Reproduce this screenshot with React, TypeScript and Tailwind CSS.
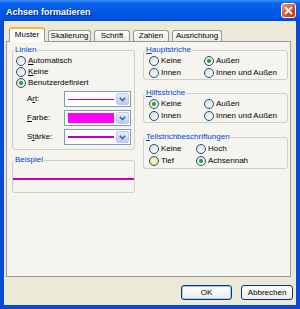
import React from 'react'

const FONT = { fontFamily: '"Liberation Sans", Arial, sans-serif' }

function Radio({ checked, hover }: { checked?: boolean; hover?: boolean }) {
  return (
    <span
      className={`w-[10px] h-[10px] rounded-full border flex items-center justify-center shrink-0 ${
        hover
          ? 'border-[#1C5180] bg-[radial-gradient(circle,#FDF3C4_30%,#F5C94F_100%)]'
          : 'border-[#1C5180] bg-[linear-gradient(135deg,#DCDBD5,#FFFFFF)]'
      }`}
    >
      {checked && <span className="w-[4px] h-[4px] rounded-full bg-[#21A121]" />}
    </span>
  )
}

function Option({ label, checked, hover, h = 'h-[12px]' }: { label: React.ReactNode; checked?: boolean; hover?: boolean; h?: string }) {
  return (
    <div className={`${h} flex items-center gap-[2px] whitespace-nowrap`}>
      <Radio checked={checked} hover={hover} />
      <span className="text-black">{label}</span>
    </div>
  )
}

function Group({ label, className, children }: { label: React.ReactNode; className: string; children?: React.ReactNode }) {
  return (
    <div className={`relative border border-[#D0D0BF] rounded-[3px] ${className}`}>
      <span className="absolute -top-[6px] left-[1px] px-[1px] bg-[#F5F4EF] text-[#0046D5] leading-[10px] whitespace-nowrap">
        {label}
      </span>
      {children}
    </div>
  )
}

function Combo({ children }: { children: React.ReactNode }) {
  return (
    <div className="w-[67px] h-[16px] border border-[#7F9DB9] bg-white flex items-center p-[1px]">
      <div className="flex-1 h-full flex items-center px-[2px]">{children}</div>
      <div className="w-[13px] h-full rounded-[2px] bg-[linear-gradient(to_bottom,#E6EEFF,#B9CCF7)] border border-[#B9CAF3] flex items-center justify-center">
        <svg width="7" height="5" viewBox="0 0 7 5">
          <path d="M0.8 0.8 L3.5 3.6 L6.2 0.8" fill="none" stroke="#4D6185" strokeWidth="1.5" />
        </svg>
      </div>
    </div>
  )
}

const TABS = [
  { label: 'Skalierung', w: 'w-[43px]' },
  { label: 'Schrift',    w: 'w-[36px]' },
  { label: 'Zahlen',     w: 'w-[36px]' },
  { label: 'Ausrichtung', w: 'w-[50px]' },
]

export default function App() {
  return (
    <div className="w-[300px] h-[309px] flex flex-col bg-[#0A4BD6] text-[8px] leading-[10px] select-none" style={FONT}>
      {/* Title bar */}
      <div className="h-[21px] shrink-0 flex items-center pl-[6px] pr-[4px] bg-[linear-gradient(to_bottom,#3C8EF7_0%,#0A62EA_15%,#0058E6_50%,#0054E3_85%,#0449D2_100%)]">
        <span className="flex-1 text-white font-bold text-[9px] leading-[12px] pt-[2px] [text-shadow:1px_1px_0_#0A1E8C]">
          Achsen formatieren
        </span>
        <div className="w-[15px] h-[15px] rounded-[3px] border border-white bg-[linear-gradient(135deg,#F39478,#DF4B24_60%,#C43A18)] flex items-center justify-center">
          <svg width="9" height="9" viewBox="0 0 9 9">
            <path d="M1.5 1.5 L7.5 7.5 M7.5 1.5 L1.5 7.5" stroke="white" strokeWidth="1.8" strokeLinecap="round" />
          </svg>
        </div>
      </div>

      {/* Body */}
      <div className="flex-1 mx-[4px] mb-[4px] bg-[#ECE9D8] flex flex-col">
        {/* Tabs */}
        <div className="mt-[6px] h-[15px] pl-[5px] flex items-end gap-[3px] relative z-10">
          <div className="w-[36px] h-[15px] bg-[#FCFCFE] border-x border-[#919B9C] rounded-t-[3px] border-t-[2px] border-t-[#F8B636] flex items-center justify-center pb-[1px]">
            Muster
          </div>
          {TABS.map(t => (
            <div
              key={t.label}
              className={`${t.w} h-[11px] mb-[1px] border border-b-0 border-[#919B9C] rounded-t-[3px] bg-[linear-gradient(to_bottom,#FFFFFF,#ECEBE6)] flex items-center justify-center whitespace-nowrap`}
            >
              {t.label}
            </div>
          ))}
        </div>

        {/* Panel */}
        <div className="-mt-[1px] ml-[2px] w-[285px] h-[236px] border border-[#919B9C] bg-[#F5F4EF] flex gap-[8px] pl-[5px] pt-[8px]">
          {/* Left column */}
          <div className="w-[123px] flex flex-col">
            <Group label="Linien" className="h-[100px] pl-[3px] pt-[4px]">
              <Option h="h-[11px]" label={<><u>A</u>utomatisch</>} />
              <Option h="h-[11px]" label={<><u>K</u>eine</>} />
              <Option h="h-[11px]" checked label="Benutzerdefiniert" />
              <div className="mt-[3px] flex flex-col gap-[3px]">
                <div className="h-[16px] flex items-center pl-[11px]">
                  <span className="w-[37px]">A<u>r</u>t:</span>
                  <Combo><div className="w-full h-[1px] bg-[#C000C0]" /></Combo>
                </div>
                <div className="h-[16px] flex items-center pl-[11px]">
                  <span className="w-[37px]"><u>F</u>arbe:</span>
                  <Combo><div className="w-full h-[10px] bg-[#FF00FF]" /></Combo>
                </div>
                <div className="h-[16px] flex items-center pl-[11px]">
                  <span className="w-[37px]">S<u>t</u>ärke:</span>
                  <Combo><div className="w-full h-[2px] bg-[#C000C0]" /></Combo>
                </div>
              </div>
            </Group>

            <Group label="Beispiel" className="mt-[10px] h-[33px]">
              <div className="mt-[17px] h-[2px] bg-[#C400C4]" />
            </Group>
          </div>

          {/* Right column */}
          <div className="w-[145px] flex flex-col">
            <Group label={<><u>H</u>auptstriche</>} className="h-[30px] pl-[5px] pt-[4px]">
              <div className="grid grid-cols-[55px_1fr]">
                <Option label="Keine" />
                <Option checked label="Außen" />
                <Option label="Innen" />
                <Option label="Innen und Außen" />
              </div>
            </Group>

            <Group label={<><u>H</u>ilfsstriche</>} className="mt-[13px] h-[30px] pl-[5px] pt-[4px]">
              <div className="grid grid-cols-[55px_1fr]">
                <Option checked label="Keine" />
                <Option label="Außen" />
                <Option label="Innen" />
                <Option label="Innen und Außen" />
              </div>
            </Group>

            <Group label={<><u>T</u>eilstrichbeschriftungen</>} className="mt-[14px] h-[32px] pl-[5px] pt-[5px]">
              <div className="grid grid-cols-[47px_1fr]">
                <Option label="Keine" />
                <Option label="Hoch" />
                <Option hover label="Tief" />
                <Option checked label="Achsennah" />
              </div>
            </Group>
          </div>
        </div>

        {/* Buttons */}
        <div className="mt-[8px] flex justify-end gap-[9px] pr-[3px]">
          <button className="w-[51px] h-[15px] rounded-[3px] border border-[#003C74] bg-[linear-gradient(to_bottom,#FFFFFF,#ECEBE6)] shadow-[inset_0_0_0_1px_#A7C3F3] flex items-center justify-center">
            OK
          </button>
          <button className="w-[52px] h-[15px] rounded-[3px] border border-[#003C74] bg-[linear-gradient(to_bottom,#FFFFFF,#ECEBE6)] flex items-center justify-center">
            Abbrechen
          </button>
        </div>
      </div>
    </div>
  )
}
